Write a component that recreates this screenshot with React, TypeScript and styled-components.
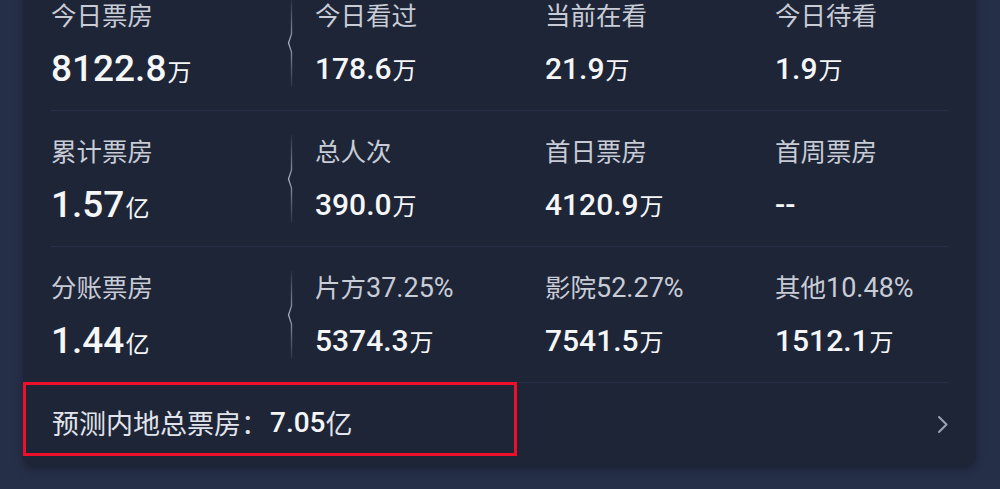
import React from "react";
import styled, { createGlobalStyle } from "styled-components";

const GlobalStyle = createGlobalStyle`
  html, body {
    margin: 0;
    padding: 0;
    background: #252f48;
    height: 100%;
    overflow: hidden;
  }
  #root {
    font-family: Roboto, "Noto Sans CJK SC", "Noto Sans", sans-serif;
  }
`;

const Page = styled.div`
  width: 1000px;
  height: 489px;
  background: #252f48;
  overflow: hidden;
`;

const Card = styled.div`
  margin: -25px 24px 0 23px;
  background: #1e2537;
  border-radius: 9px;
  box-shadow: 0 4px 8px rgba(0, 0, 0, 0.28);
  display: flex;
  flex-direction: column;
`;

const Row = styled.div`
  margin: 0 28px;
  height: 136px;
  box-sizing: border-box;
  border-bottom: 1px solid #283047;
  display: grid;
  grid-template-columns: 236px 28px 230px 230px 1fr;
  align-items: start;
`;

const Cell = styled.div`
  padding-top: 24px;
  display: flex;
  flex-direction: column;
`;

const Label = styled.div`
  font-size: 25.5px;
  line-height: 34px;
  height: 34px;
  color: #c8ccd6;
  white-space: nowrap;
`;

const Pct = styled.span`
  font-size: 27px;
`;

const Value = styled.div<{ $big?: boolean }>`
  margin-top: 14px;
  height: 44px;
  line-height: 44px;
  font-size: ${(p) => (p.$big ? "37px" : "30px")};
  font-weight: 500;
  color: #f5f6f8;
  white-space: nowrap;
`;

const Unit = styled.span`
  font-size: 24px;
  font-weight: 400;
  margin-left: 1px;
`;

const DividerBox = styled.div`
  align-self: center;
  height: 88px;
  display: flex;
`;

const Footer = styled.div`
  height: 82px;
  display: flex;
  align-items: center;
  justify-content: space-between;
`;

const Highlight = styled.div`
  align-self: flex-start;
  margin-top: -1px;
  width: 494px;
  height: 74px;
  box-sizing: border-box;
  border: 3px solid #ee0f2a;
  display: flex;
  align-items: center;
  padding: 6px 0 0 26px;
  font-size: 27px;
  color: #e1e4ea;
  white-space: nowrap;
`;

const Forecast = styled.span`
  font-size: 28px;
  font-weight: 500;
  color: #f5f6f8;
  margin-left: 2px;
`;

const Chevron = styled.div`
  margin-right: 27px;
  display: flex;
`;

const Divider = () => (
  <DividerBox>
    <svg width="24" height="88" viewBox="0 0 24 88">
      <defs>
        <linearGradient id="dv" x1="0" y1="0" x2="0" y2="1">
          <stop offset="0" stopColor="#8a93a8" stopOpacity="0.1" />
          <stop offset="0.25" stopColor="#8a93a8" stopOpacity="0.6" />
          <stop offset="0.5" stopColor="#b0b8c9" stopOpacity="0.95" />
          <stop offset="0.75" stopColor="#8a93a8" stopOpacity="0.6" />
          <stop offset="1" stopColor="#8a93a8" stopOpacity="0.1" />
        </linearGradient>
      </defs>
      <path
        d="M4.5 0 V35 L1.5 44 L4.5 53 V88"
        fill="none"
        stroke="url(#dv)"
        strokeWidth="1.3"
      />
    </svg>
  </DividerBox>
);

type Item = { label: string; pct?: string; value: string; unit?: string };
type RowData = { first: Item; rest: Item[] };

const rows: RowData[] = [
  {
    first: { label: "今日票房", value: "8122.8", unit: "万" },
    rest: [
      { label: "今日看过", value: "178.6", unit: "万" },
      { label: "当前在看", value: "21.9", unit: "万" },
      { label: "今日待看", value: "1.9", unit: "万" },
    ],
  },
  {
    first: { label: "累计票房", value: "1.57", unit: "亿" },
    rest: [
      { label: "总人次", value: "390.0", unit: "万" },
      { label: "首日票房", value: "4120.9", unit: "万" },
      { label: "首周票房", value: "--" },
    ],
  },
  {
    first: { label: "分账票房", value: "1.44", unit: "亿" },
    rest: [
      { label: "片方", pct: "37.25%", value: "5374.3", unit: "万" },
      { label: "影院", pct: "52.27%", value: "7541.5", unit: "万" },
      { label: "其他", pct: "10.48%", value: "1512.1", unit: "万" },
    ],
  },
];

const Stat = ({ item, big }: { item: Item; big?: boolean }) => (
  <Cell>
    <Label>
      {item.label}
      {item.pct && <Pct>{item.pct}</Pct>}
    </Label>
    <Value $big={big}>
      {item.value}
      {item.unit && <Unit>{item.unit}</Unit>}
    </Value>
  </Cell>
);

export default function App() {
  return (
    <Page>
      <GlobalStyle />
      <Card>
        {rows.map((r, i) => (
          <Row key={i}>
            <Stat item={r.first} big />
            <Divider />
            {r.rest.map((it, j) => (
              <Stat key={j} item={it} />
            ))}
          </Row>
        ))}
        <Footer>
          <Highlight>
            预测内地总票房：<Forecast>7.05</Forecast>亿
          </Highlight>
          <Chevron>
            <svg width="12" height="19" viewBox="0 0 12 19">
              <polyline
                points="2,2 9.5,9.5 2,17"
                fill="none"
                stroke="#9ba2b3"
                strokeWidth="2"
                strokeLinecap="round"
                strokeLinejoin="round"
              />
            </svg>
          </Chevron>
        </Footer>
      </Card>
    </Page>
  );
}
